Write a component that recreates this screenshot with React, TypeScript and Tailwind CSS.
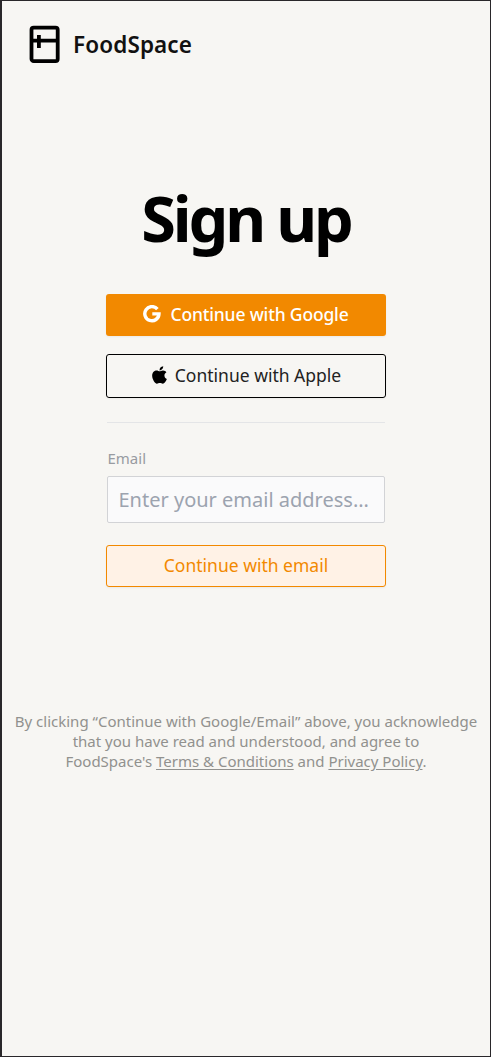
import { FaApple } from "react-icons/fa";

function FridgeIcon() {
  return (
    <svg className="h-[38px] w-[31px] shrink-0" viewBox="0 0 31 38" fill="none" stroke="#000">
      <rect x="2.5" y="2.6" width="26.2" height="33.5" rx="2.2" strokeWidth="3.8" />
      <path d="M2 15.6H29M9.9 10V23" strokeWidth="3.8" />
    </svg>
  );
}

function GoogleIcon() {
  return (
    <svg className="h-[18px] w-[18px] shrink-0" viewBox="0 0 18 18" fill="none" stroke="#fff" strokeWidth="3.4">
      <path d="M14.4 4.2A7.1 7.1 0 1 0 16 8.9H9.3" />
    </svg>
  );
}

export default function App() {
  return (
    <div className="flex h-[1057px] w-[491px] flex-col border border-l-2 border-[#29272a] bg-[#f7f6f3] font-['Noto_Sans',sans-serif] text-black">
      <header className="flex items-center pt-6 pl-[27px]">
        <FridgeIcon />
        <span className="ml-[13px] text-[22.5px] leading-[37px] font-semibold tracking-[0.005em] text-[#111]">FoodSpace</span>
      </header>

      <main className="flex flex-col items-center">
        <h1 className="mt-[119px] h-20 text-[63px] leading-[71px] font-bold tracking-[-0.05em] whitespace-nowrap">Sign up</h1>

        <div className="mt-8 flex w-[280px] flex-col">
          <button className="flex h-[42px] items-center justify-center gap-[9px] rounded-[3px] bg-[#f28900] pb-0.5 text-[17.5px] font-medium tracking-[-0.01em] whitespace-nowrap text-white shadow-xs">
            <GoogleIcon />
            Continue with Google
          </button>
          <button className="mt-[18px] flex h-11 items-center justify-center gap-[7px] rounded-[3px] border border-black pb-0.5 text-[17.5px] whitespace-nowrap text-[#222] shadow-xs">
            <FaApple className="h-[20px] w-[17px] text-black" />
            Continue with Apple
          </button>
          <hr className="mx-px mt-6 border-[#e4e5e7]" />
          <label htmlFor="email" className="mt-[25px] ml-[1.5px] text-[15px] leading-5 text-[#989ba1]">Email</label>
          <input
            id="email"
            type="email"
            placeholder="Enter your email address..."
            className="mx-px mt-[8px] h-[47px] rounded-[2px] border border-[#d2d3d6] bg-[#fafafb] px-[10.5px] text-[20px] outline-none placeholder:text-[#9ca3af]"
          />
          <button className="mt-[22px] h-[42px] rounded-[3px] border border-[#f28900] bg-[#fff2e6] pb-0.5 text-[17.5px] whitespace-nowrap text-[#f28900] shadow-xs">
            Continue with email
          </button>
        </div>

        <p className="mt-[124px] text-center text-[15px] leading-5 whitespace-nowrap text-[#91918e]">
          By clicking “Continue with Google/Email” above, you acknowledge
          <br />
          that you have read and understood, and agree to
          <br />
          FoodSpace's <a className="underline underline-offset-2">Terms &amp; Conditions</a> and{" "}
          <a className="underline underline-offset-2">Privacy Policy</a>.
        </p>
      </main>
    </div>
  );
}
